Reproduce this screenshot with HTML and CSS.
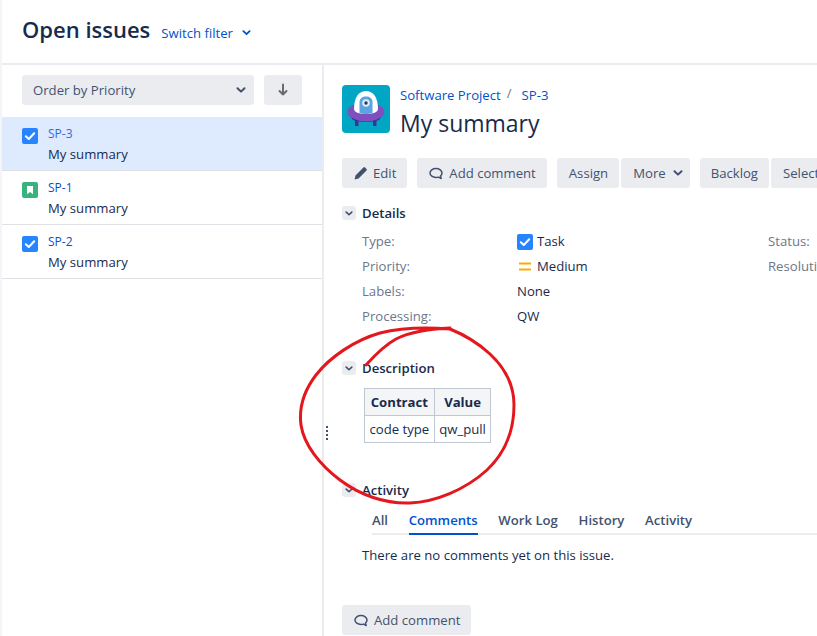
FILE: index.html
```html
<!DOCTYPE html>
<html lang="en">
<head>
<meta charset="utf-8">
<title>Open issues</title>
<link rel="stylesheet" href="styles.css">
</head>
<body>
<div class="app">
  <header class="top">
    <h1 class="page-title">Open issues</h1>
    <a class="switch">Switch filter
      <svg class="chev" viewBox="0 0 10 6" width="9" height="5.400"><path d="M1.500 1.200 5 4.600l3.500-3.400" fill="none" stroke="currentColor" stroke-width="2" stroke-linecap="round" stroke-linejoin="round"/></svg>
    </a>
  </header>
  <div class="main">
    <aside class="side">
      <div class="order">
        <div class="select"><span>Order by Priority</span>
          <svg class="chev dark" viewBox="0 0 10 6" width="10" height="6"><path d="M1.500 1.200 5 4.600l3.500-3.400" fill="none" stroke="currentColor" stroke-width="2" stroke-linecap="round" stroke-linejoin="round"/></svg>
        </div>
        <div class="sort">
          <svg viewBox="0 0 12 14" width="12" height="14"><path d="M6 1.500v10M2.500 8 6 11.500 9.500 8" fill="none" stroke="#6b6b6f" stroke-width="2" stroke-linecap="round" stroke-linejoin="round"/></svg>
        </div>
      </div>
      <ul class="list">
        <li class="item active">
          <svg class="type" viewBox="0 0 16 16" width="16" height="16"><rect width="16" height="16" rx="2" fill="#2684ff"/><path d="M3.800 8.200 6.800 11 12.200 5.200" fill="none" stroke="#fff" stroke-width="2" stroke-linecap="round" stroke-linejoin="round"/></svg>
          <div><div class="key">SP-3</div><div class="sum">My summary</div></div>
        </li>
        <li class="item">
          <svg class="type" viewBox="0 0 16 16" width="16" height="16"><rect width="16" height="16" rx="2" fill="#36b37e"/><path d="M5 4h6v8.200L8 10l-3 2.200z" fill="#fff"/></svg>
          <div><div class="key">SP-1</div><div class="sum">My summary</div></div>
        </li>
        <li class="item">
          <svg class="type" viewBox="0 0 16 16" width="16" height="16"><rect width="16" height="16" rx="2" fill="#2684ff"/><path d="M3.800 8.200 6.800 11 12.200 5.200" fill="none" stroke="#fff" stroke-width="2" stroke-linecap="round" stroke-linejoin="round"/></svg>
          <div><div class="key">SP-2</div><div class="sum">My summary</div></div>
        </li>
      </ul>
    </aside>
    <div class="resize"><i></i><i></i><i></i><i></i></div>
    <section class="detail">
      <div class="issue-head">
        <svg class="avatar" viewBox="0 0 48 48" width="48" height="48">
          <rect width="48" height="48" rx="4" fill="#00a6c4"/>
          <path d="M13 33h3.500v8H13zM31 33h3.500v8H31z" fill="#403294"/>
          <ellipse cx="24" cy="27" rx="18.500" ry="9.500" fill="#7f4fbf"/>
          <path d="M9 32c4 3 9 4.500 15 4.500S35 35 39 32l-2 3c-4 1.500-8 2-13 2s-9-.5-13-2z" fill="#403294"/>
          <path d="M12 24C12 12 17 6 24 6s12 6 12 18c0 3-5 5-12 5s-12-2-12-5z" fill="#fff"/>
          <path d="M17.500 28V17c0-3.500 2.800-5.500 6.500-5.500s6.500 2 6.500 5.500v11c-2 .7-4 1-6.500 1s-4.500-.3-6.500-1z" fill="#5aa4e0"/>
          <circle cx="24" cy="18" r="3.800" fill="#deebff"/>
          <circle cx="24" cy="18" r="1.700" fill="#253858"/>
        </svg>
        <div>
          <nav class="crumbs"><a>Software Project</a><span class="slash">/</span><a>SP-3</a></nav>
          <h2 class="issue-title">My summary</h2>
        </div>
      </div>
      <div class="toolbar">
        <div class="group"><button class="btn"><svg viewBox="0 0 14 14" width="14" height="14"><path d="M.6 13.400l.9-4 7.900-7.900a1.200 1.200 0 0 1 1.700 0l1.400 1.400a1.200 1.200 0 0 1 0 1.700l-7.900 7.900z" fill="#42526e"/></svg>Edit</button></div>
        <div class="group"><button class="btn cmt"><svg viewBox="0 0 14 14" width="14" height="14"><path d="M7 2.500C3.700 2.500 1 4.500 1 7s2.700 4.500 6 4.500c.9 0 1.700-.1 2.500-.4l2.700 1.400-.7-2.500C12.500 9.200 13 8.100 13 7c0-2.500-2.700-4.500-6-4.500z" fill="none" stroke="#42526e" stroke-width="1.500" stroke-linejoin="round"/></svg>Add comment</button></div>
        <div class="group tight"><button class="btn">Assign</button><button class="btn more">More<svg class="chev dark gap" viewBox="0 0 10 6" width="10" height="6"><path d="M1.500 1.200 5 4.600l3.500-3.400" fill="none" stroke="currentColor" stroke-width="2" stroke-linecap="round" stroke-linejoin="round"/></svg></button></div>
        <div class="group tight"><button class="btn backlog">Backlog</button><button class="btn">Selected for Development</button></div>
      </div>

      <div class="mod-head"><span class="twisty"><svg viewBox="0 0 10 6" width="8" height="5"><path d="M1.500 1.200 5 4.600l3.500-3.400" fill="none" stroke="#42526e" stroke-width="2" stroke-linecap="round" stroke-linejoin="round"/></svg></span><h3>Details</h3></div>
      <div class="fields">
        <div class="lab">Type:</div>
        <div class="val"><svg viewBox="0 0 16 16" width="16" height="16"><rect width="16" height="16" rx="2" fill="#2684ff"/><path d="M3.800 8.200 6.800 11 12.200 5.200" fill="none" stroke="#fff" stroke-width="2" stroke-linecap="round" stroke-linejoin="round"/></svg>Task</div>
        <div class="lab">Status:</div>
        <div class="lab">Priority:</div>
        <div class="val"><svg viewBox="0 0 16 16" width="16" height="16"><path d="M2 4.500h12M2 10.500h12" stroke="#ffab00" stroke-width="2" fill="none"/></svg>Medium</div>
        <div class="lab">Resolution:</div>
        <div class="lab">Labels:</div>
        <div class="val">None</div>
        <div></div>
        <div class="lab">Processing:</div>
        <div class="val">QW</div>
        <div></div>
      </div>

      <div class="mod-head desc"><span class="twisty"><svg viewBox="0 0 10 6" width="8" height="5"><path d="M1.500 1.200 5 4.600l3.500-3.400" fill="none" stroke="#42526e" stroke-width="2" stroke-linecap="round" stroke-linejoin="round"/></svg></span><h3>Description</h3></div>
      <table class="tbl">
        <tr><th>Contract</th><th>Value</th></tr>
        <tr><td>code type</td><td>qw_pull</td></tr>
      </table>

      <div class="mod-head act"><span class="twisty"><svg viewBox="0 0 10 6" width="8" height="5"><path d="M1.500 1.200 5 4.600l3.500-3.400" fill="none" stroke="#42526e" stroke-width="2" stroke-linecap="round" stroke-linejoin="round"/></svg></span><h3>Activity</h3></div>
      <div class="tabs">
        <a>All</a><a class="on">Comments</a><a>Work Log</a><a>History</a><a>Activity</a>
      </div>
      <p class="empty">There are no comments yet on this issue.</p>
      <button class="btn cmt add"><svg viewBox="0 0 14 14" width="14" height="14"><path d="M7 2.500C3.700 2.500 1 4.500 1 7s2.700 4.500 6 4.500c.9 0 1.700-.1 2.500-.4l2.700 1.400-.7-2.500C12.500 9.200 13 8.100 13 7c0-2.500-2.700-4.500-6-4.500z" fill="none" stroke="#42526e" stroke-width="1.500" stroke-linejoin="round"/></svg>Add comment</button>
    </section>
  </div>
  <svg class="scribble" viewBox="0 0 817 636" width="817" height="636">
    <path d="M366 365C375 355 385 345 396 339C408 333 425 329 450 328M450 329C425 327 400 328 380 333C355 340 330 357 316 375C303 392 299 410 301 425C304 445 320 465 340 480C360 495 385 504 410 503C435 502 465 490 487 470C505 453 514 430 514 405C514 385 505 368 490 354C478 343 465 335 450 329" fill="none" stroke="#e3171d" stroke-width="3" stroke-linecap="round" stroke-linejoin="round"/>
  </svg>
</div>
</body>
</html>
```

FILE: styles.css
```css
* { box-sizing: border-box; }
html, body { margin: 0; padding: 0; background: #fff; }
body {
  font-family: "Open Sans", "Noto Sans", sans-serif;
  font-size: 13.15px;
  color: #172b4d;
  overflow: hidden;
}
.app {
  position: relative;
  width: 817px;
  height: 636px;
  overflow: hidden;
  display: flex;
  flex-direction: column;
  border-left: 2px solid #f4f5f7;
}
.top {
  height: 65px;
  flex: none;
  display: flex;
  align-items: center;
  padding: 0 20px 6px;
  border-bottom: 2px solid #ebecf0;
}
.page-title {
  margin: 0;
  font-size: 22px;
  font-weight: 600;
  color: #172b4d;
  line-height: 30px;
}
.switch {
  margin-left: 11px;
  margin-top: 9px;
  color: #0052cc;
  display: flex;
  align-items: center;
  gap: 9px;
}
.chev { color: #0052cc; display: block; }
.chev.dark { color: #42526e; }
.chev.gap { margin-left: 2px; }

.main { flex: 1; display: flex; min-height: 0; }
.side { width: 322px; flex: none; border-right: 2px solid #ebecf0; }
.order { display: flex; gap: 10px; padding: 10px 20px 0; height: 52px; }
.select {
  width: 232px;
  height: 30px;
  background: #ebecf0;
  border-radius: 3px;
  display: flex;
  align-items: center;
  justify-content: space-between;
  padding: 0 8px 0 11px;
  color: #42526e;
}
.sort {
  width: 38px;
  height: 30px;
  background: #ebecf0;
  border-radius: 3px;
  display: flex;
  align-items: center;
  justify-content: center;
}
.list { list-style: none; margin: 0; padding: 0; }
.item {
  height: 54px;
  display: flex;
  gap: 10px;
  padding: 9px 20px 0;
  border-bottom: 1px solid #dfe1e6;
}
.item.active { background: #deebff; }
.type { flex: none; margin-top: 2px; display: block; }
.key { font-size: 12px; line-height: 16px; color: #0052cc; }
.active .key { color: #2f6ae0; }
.sum { line-height: 21px; margin-top: 2px; color: #172b4d; }

.resize {
  position: absolute;
  left: 324px;
  top: 426px;
  display: flex;
  flex-direction: column;
  gap: 2px;
}
.resize i { width: 2px; height: 2px; background: #42526e; display: block; }

.detail { flex: 1; min-width: 0; padding: 20px 0 0 18px; overflow: hidden; }
.issue-head { display: flex; gap: 10px; height: 48px; }
.avatar { flex: none; display: block; }
.crumbs { display: flex; align-items: center; color: #0052cc; line-height: 20px; }
.slash { color: #6b778c; margin: -4px 10px 0 6px; }
.issue-title { margin: 3px 0 0; font-size: 23px; font-weight: 500; line-height: 30px; color: #172b4d; }
.toolbar { display: flex; gap: 10px; margin-top: 25px; white-space: nowrap; }
.group { display: flex; flex: none; }
.group.tight { gap: 2px; }
.btn {
  font: inherit;
  height: 30px;
  border: 0;
  border-radius: 3px;
  background: #ebecf0;
  color: #42526e;
  padding: 0 11px 0 12px;
  display: inline-flex;
  align-items: center;
  gap: 5px;
  white-space: nowrap;
}
.btn.cmt { gap: 6px; }
.btn.more { padding-right: 7px; }
.btn.backlog { padding-left: 11px; }
.mod-head { display: flex; align-items: center; gap: 6px; height: 20px; margin-top: 15px; }
.mod-head h3 { margin: 0; font-size: inherit; font-weight: 600; color: #172b4d; }
.twisty {
  width: 14px;
  height: 14px;
  background: #ebecf0;
  border-radius: 3px;
  display: flex;
  align-items: center;
  justify-content: center;
}
.twisty svg { display: block; }
.fields {
  display: grid;
  grid-template-columns: 155px 251px 100px;
  grid-auto-rows: 25px;
  margin: 6px 0 0 20px;
  width: 520px;
  line-height: 25px;
}
.lab { color: #6b778c; white-space: nowrap; }
.val { display: flex; align-items: center; gap: 4px; color: #172b4d; }
.mod-head.desc { margin-top: 29px; }
.tbl { border-collapse: collapse; margin: 10px 0 0 22px; }
.tbl th, .tbl td { border: 1px solid #c1c7d0; padding: 0 4.500px; height: 27px; font-weight: 400; text-align: center; }
.tbl th { background: #f4f5f7; font-weight: 700; }
.mod-head.act { margin-top: 37px; }
.tabs {
  display: flex;
  gap: 20.700px;
  margin: 11px 0 0 30px;
  border-bottom: 2px solid #ebecf0;
  height: 24px;
}
.tabs a { color: #42526e; font-weight: 600; height: 24px; }
.tabs a.on { color: #0052cc; border-bottom: 2px solid #0052cc; }
.empty { margin: 10px 0 0 20px; line-height: 20px; }
.add { margin-top: 40px; }
.scribble { position: absolute; left: -2px; top: 0; pointer-events: none; }
```
